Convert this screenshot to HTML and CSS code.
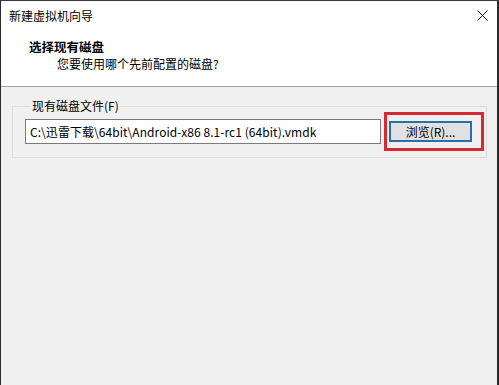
FILE: index.html
```html
<!DOCTYPE html>
<html lang="zh-CN">
<head>
    <meta charset="UTF-8">
    <meta name="viewport" content="width=device-width, initial-scale=1.0">
    <title>新建虚拟机向导</title>
    <link rel="stylesheet" href="styles.css">
</head>
<body>

    <div class="window">
        <div class="titlebar">
            <span class="title">新建虚拟机向导</span>
            <span class="close">
                <svg width="11" height="11" viewBox="0 0 11 11">
                    <path d="M0.5 0.5 L10.5 10.5 M10.5 0.5 L0.5 10.5" stroke="#111" stroke-width="1" fill="none"/>
                </svg>
            </span>
        </div>

        <div class="header">
            <div class="heading">选择现有磁盘</div>
            <div class="subheading">您要使用哪个先前配置的磁盘?</div>
        </div>

        <div class="content">
            <fieldset class="group">
                <legend>现有磁盘文件(F)</legend>
                <div class="file-row">
                    <div class="path">C:\迅雷下载\64bit\Android-x86 8.1-rc1 (64bit).vmdk</div>
                    <div class="highlight">
                        <button class="browse">浏览(R)...</button>
                    </div>
                </div>
            </fieldset>
        </div>
    </div>

</body>
</html>
```

FILE: styles.css
```css
body {
    margin: 0;
    font-family: "Noto Sans CJK SC", "Microsoft YaHei", sans-serif;
    font-size: 12px;
    color: #000;
    background: #f0f0f0;
}
.window {
    box-sizing: border-box;
    width: 499px;
    height: 385px;
    border-top: 1px solid #3a3a3a;
    border-left: 1px solid #2b2b2b;
    border-right: 2px solid #2b2b2b;
    background: #f0f0f0;
}
.titlebar {
    display: flex;
    justify-content: space-between;
    align-items: center;
    height: 29px;
    padding: 0 9px 0 8px;
    background: white;
}
.close {
    display: flex;
}
.header {
    height: 56px;
    padding-left: 28px;
    background: white;
    border-bottom: 1px solid #a0a0a0;
}
.heading {
    font-weight: bold;
    font-size: 12.5px;
    line-height: 16px;
    padding-top: 9px;
}
.subheading {
    padding-left: 28px;
    line-height: 16px;
    padding-top: 1px;
}
.content {
    padding: 11px 10px 0 11px;
}
.group {
    margin: 0;
    padding: 0 0 6px 12px;
    border: 1px solid #dcdcdc;
}
.group legend {
    padding: 0 1px;
    margin-left: 6px;
    line-height: 16px;
}
.file-row {
    display: flex;
    align-items: center;
    gap: 3px;
    margin-top: -2px;
}
.path {
    box-sizing: border-box;
    width: 356px;
    height: 25px;
    line-height: 23px;
    padding-left: 4px;
    border: 1px solid #7a7a7a;
    background: white;
    white-space: nowrap;
    letter-spacing: 0.05px;
}
.highlight {
    box-sizing: border-box;
    width: 100px;
    height: 39px;
    padding: 3px 9px 4px 2px;
    border: 3px solid #d42a33;
    display: flex;
    align-items: center;
}
.browse {
    box-sizing: border-box;
    width: 83px;
    height: 21px;
    font: inherit;
    padding: 0;
    border: 2px solid #2a6fa8;
    background: #e1e1e1;
    color: #000;
}
```
